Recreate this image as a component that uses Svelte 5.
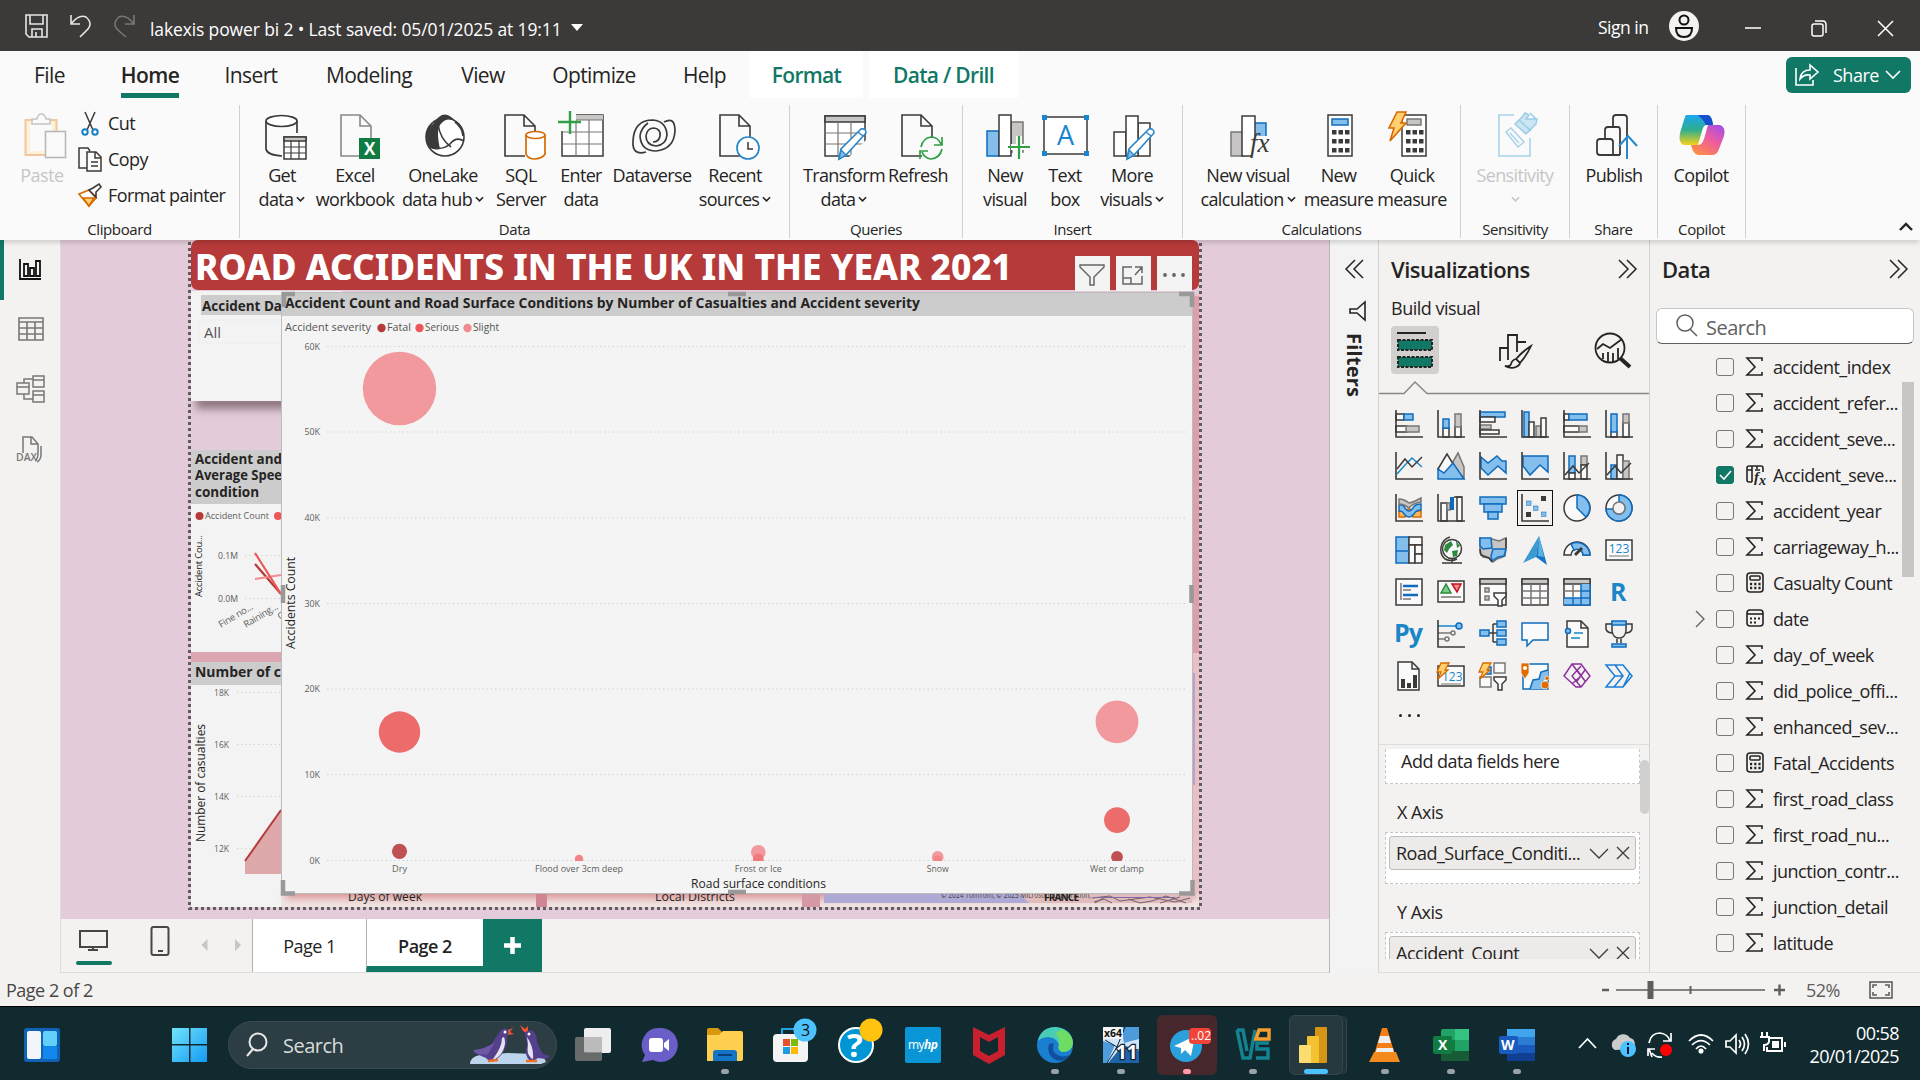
<script>
  const K = '#3b3a39';
  const B = '#0f6cbd';
  const L = '#83beec';
  const G = '#797775';
  const S = '#c8c6c4';
  const axes = `<path d="M1 0V27H28" fill="none" stroke="${K}" stroke-width="1.6"/>`;
  const r = (x, y, w, h, f = '#fafafa', s = K) =>
    `<rect x="${x}" y="${y}" width="${w}" height="${h}" fill="${f}" stroke="${s}" stroke-width="1.5"/>`;
  const p = (d, s = K, f = 'none', w = 1.5) => `<path d="${d}" fill="${f}" stroke="${s}" stroke-width="${w}"/>`;
  const c = (x, y, q, s = K, f = 'none', w = 1.5) =>
    `<circle cx="${x}" cy="${y}" r="${q}" fill="${f}" stroke="${s}" stroke-width="${w}"/>`;
  const t = (x, y, size, fill, s, extra = '') =>
    `<text x="${x}" y="${y}" font-size="${size}" fill="${fill}" ${extra}>${s}</text>`;
  const bolt = p('M4 1H12L8 8H11L1 17L4 10H0Z', '#d66b00', '#ffcf70', 1.3);
  const funnelS = p('M15 15H27V18L23 22V28H19V22L15 18Z', K, '#fafafa', 1.5);

  // Visual gallery, drawn on a 28px grid
  const visuals = [
    r(1, 4, 8, 6) + r(9, 4, 9, 6, L, B) + r(1, 16, 11, 6) + r(11, 16, 13, 6, S, G) + axes,
    r(6, 18, 6, 9) + r(6, 9, 6, 9, L, B) + r(18, 16, 6, 11) + r(18, 4, 6, 13, S, G) + axes,
    r(1, 2, 25, 5, L, B) + r(1, 7, 15, 5) + r(1, 15, 11, 4, S, G) + r(1, 20, 19, 4) + axes,
    r(3, 2, 5, 25, L, B) + r(8, 12, 5, 15) + r(15, 16, 5, 11, S, G) + r(20, 8, 5, 19) + axes,
    r(1, 4, 5, 6) + r(6, 4, 18, 6, L, B) + r(1, 16, 15, 6) + r(16, 16, 8, 6, S, G) + axes,
    r(6, 21, 6, 6) + r(6, 4, 6, 18, L, B) + r(18, 12, 6, 15) + r(18, 4, 6, 9, S, G) + axes,
    p('M2 22 10 13 17 6 27 15', '#1a86c7') + p('M2 17 10 7 17 15 27 5') + axes,
    p('M14 13 21 1 27 15V26Z', G, S) + p('M1 17 10 2 18 15 7 22Z', K, '#fafafa') + p('M1 17 7 21 16 11 27 27H1Z', B, L),
    p('M2 5 9 11 18 4 23 9H27V21L19 14 9 23 2 16Z', B, L) + axes,
    p('M2 4H27V20L19 13 9 23 2 14Z', B, L) + axes,
    r(6, 4, 6, 17, L, B) + r(6, 21, 6, 6) + r(18, 4, 6, 9, S, G) + r(18, 13, 6, 14) + p('M2 23 10 14 16 21 26 11') + axes,
    r(6, 13, 6, 14, L, B) + r(12, 3, 6, 24) + r(18, 9, 6, 18, S, G) + p('M2 23 10 14 16 21 26 11') + axes,
    p('M4 17H10Q14 13 18 17H26V23H18Q14 17 10 23H4Z', '#d66b00', '#ffb55a') + p('M4 11Q8 10 10 14 14 20 18 14 20 10 26 10V16Q21 16 19 20 14 26 9 20 8 17 4 17Z', B, L) + p('M4 5Q9 5 14 9 19 8 26 4V8Q18 9 14 14 9 10 4 10Z', G, S) + axes,
    r(4, 9, 6, 18) + r(10, 9, 3, 7, S, G) + `<rect x="13" y="3" width="4" height="13" fill="${B}"/>` + r(20, 3, 5, 24) + p('M17 3H25') + axes,
    r(1, 3, 26, 7, L, B) + r(5, 10, 18, 8, L, B) + r(9, 18, 10, 7, L, B),
    `<g fill="${L}" stroke="${B}" stroke-width=".5"><rect x="5.500" y="7" width="4.500" height="4.500"/><rect x="12.500" y="12" width="4.500" height="4.500"/><rect x="20.500" y="18" width="4.500" height="4.500"/></g><path d="M20 2h5v5h-5zM5 18h5v5h-5z" fill="${K}"/>` + axes,
    c(14, 14, 13, K, '#fafafa') + p('M14 14V1A13 13 0 0 1 23 23Z', B, L),
    c(14, 14, 13, K, '#fafafa') + p('M14 1A13 13 0 1 1 1 15H8A6 6 0 1 0 14 8Z', B, L) + c(14, 14, 6, G, '#f3f2f1'),
    r(1, 1, 13, 26, L, B) + r(14, 1, 13, 8) + r(14, 9, 6, 18) + r(20, 9, 7, 9) + r(20, 18, 7, 9) + p('M1 15H14', B),
    c(15, 13, 9.5, K, '#fafafa') + p('M13 1A13 13 0 0 0 8 23Q14 26 20 23M15 23V27M5 27H25') + `<path d="M8 9 14 5 16 9 12 13 10 17 7 14ZM19 5 23 10 20 12ZM15 15 21 14 20 20 16 21Z" fill="#2b8a3e"/>`,
    p('M1 2 4 3 13 3 20 5 27 2V13L26 20 21 22 18 23 14 26 10 22 4 21 1 17Z', G, S) + p('M1 2H12L13 12 4 13 1 10Z', B, L) + p('M14 13H27L25 20 19 21 13 25 12 20Z', B, L) + p('M27 2V12M1 13 2 19 10 22 13 26', K),
    `<path d="M18 0 2 27 15 21Z" fill="#3a9bd0"/><path d="M18 0 15 21 26 29Z" fill="#1673c5"/><path d="M18 0 17 20 23 21Z" fill="#57b4dd"/>`,
    p('M1 19A13 13 0 0 1 27 19H20A6 6 0 0 0 8 19Z', K, '#fafafa') + p('M8 8A13 13 0 0 1 27 19H20A6 6 0 0 0 11 14Z', B, L) + p('M12 19 19 12', K, 'none', 3),
    r(1, 4, 26, 20) + t(14, 17, 12, '#1a86c7', '123', 'text-anchor="middle"') + p('M4 20H24', G, 'none', 1),
    r(1, 1, 26, 26) + p('M6 5V22', G) + p('M8 8H23M8 17H23', B, 'none', 2.5) + p('M8 12H16M8 21H16', G),
    r(1, 3, 26, 21) + p('M4 15 9 6 14 15Z', '#2b8a3e', '#7cc98b') + p('M15 6H24L20 14Z', '#c50f1f', '#f0888e') + p('M4 19H24', G),
    r(1, 1, 26, 26) + r(1, 1, 26, 5, S) + r(6, 10, 4, 4, S, G) + r(6, 18, 4, 4, S, G) + funnelS,
    r(1, 1, 26, 26) + r(1, 1, 26, 5, S) + p('M10 6V27M19 6V27M1 13H27M1 20H27', G),
    r(1, 1, 26, 26) + r(1, 1, 26, 5, S) + `<path d="M18 6H27V27H1V20H18Z" fill="${L}"/>` + p('M10 6V19M1 13H18', G) + p('M18 6V27M18 13H27M1 20H27M10 20V27M1 27H27V6', B),
    t(5, 23, 25, '#1a86c7', 'R', 'font-weight="700"'),
    t(-1, 22, 25, '#1a86c7', 'Py', 'font-weight="700" textLength="29"'),
    p('M1 6H20', '#1a86c7') + p('M1 13H14M1 19H8', G) + c(22, 6, 3, B, L) + c(16, 13, 2, G) + c(10, 19, 2, G) + axes,
    p('M10 13H18M14 4V22M14 4H18M14 22H18') + r(1, 10, 9, 6, L, B) + r(18, 1, 9, 6, L, B) + r(18, 10, 9, 6, L, B) + r(18, 19, 9, 6, L, B),
    p('M1 3H27V20H12L6 26V20H1Z', B, '#fafafa'),
    p('M4 1H18L25 8V27H4Z', K, '#fafafa') + p('M18 1V8H25') + c(5, 11, 2.5, B, L) + p('M11 13H20M8 18H17', '#1a86c7', 'none', 1.3),
    p('M7 2H21V11Q20 18 14 18 8 18 7 11ZM7 4H1V9Q2 13 8 13M21 4H27V9Q26 13 20 13M12 18V23M16 18V23') + r(7, 1, 14, 4, L, B) + r(7, 24, 14, 3, L, B),
    p('M3 0H17L24 7V28H3Z', K, '#fafafa') + p('M17 0V7H24') + `<path d="M6 17h4v9H6zM12 21h4v5h-4zM18 13h4v13h-4z" fill="${K}"/>`,
    r(1, 4, 26, 20) + t(5, 19, 12, '#1a86c7', '123') + p('M4 22H24', G, 'none', 1) + bolt,
    r(15, 1, 11, 10, '#fafafa', G) + r(1, 15, 11, 10, '#fafafa', G) + r(4, 5, 8, 7, L, B) + funnelS + bolt,
    r(2, 2, 25, 25, '#fafafa', B) + `<path d="M27 8 20 10 18 17 12 18 9 27H23V18H27Z" fill="${L}"/>` + p('M27 8 20 10 18 17 12 18 9 27', B) + `<path d="M0 1H8V11L4 17 0 11ZM24 19a4 4 0 1 0 .1 0ZM26 14a2.200 2.200 0 1 0 .1 0Z" fill="#e06c00" stroke="#f3f2f1" stroke-width=".8"/><circle cx="4" cy="6" r="2" fill="#fff"/>`,
    p('M9 2H18L27 14 18 25H13L1 14 9 2ZM9 2 18 14 9 22M18 25 9 14 18 4M14 19 22 8M14 8 22 19', '#8b2d9b', 'none', 1.4),
    p('M1 3H18L27 14 18 25H1L10 14Z M10 14H18M10 3 18 14 9 25M1 25 10 14M18 25 25 11', '#1a7fd8', 'none', 1.5),
  ];

  // Ribbon pictures, drawn on a 48px grid
  const k = '#3b3a39';
  const doc = (x, col = K) =>
    p(`M${x + 20} 45H${x}V4H${x + 19}L${x + 30} 15V27M${x + 19} 4V15H${x + 30}`, col, 'none', 1.6);
  const pencil = p('M18 48 20 38 40 18Q45 17 45 22L25 44Z', '#2b88c8', '#fff', 1.6) + p('M18 48 20 39 25 44Z', '#2b88c8', L, 1.4) + p('M37 21 42 25', '#2b88c8');
  const calc = (x) =>
    r(x, 4, 24, 41, '#fff') + [0, 1, 2].map((j) => [0, 1, 2].map((i) => `<rect x="${x + 4 + i * 6.500}" y="${19 + j * 9}" width="4.500" height="4.500" fill="${K}"/>`).join('')).join('');
  const icons = {
    get: p('M7 10V38Q8 44 23 45M38 10V22', K, 'none', 1.7) + `<ellipse cx="22.500" cy="10" rx="15.500" ry="5.500" fill="#fff" stroke="${k}" stroke-width="1.700"/>` + r(25, 26, 22, 22, '#fff') + r(25, 26, 22, 4, S) + p('M25 36H47M25 42H47M32 30V48M40 30V48', K, 'none', 1.2),
    excel: doc(9, '#8a8886') + '<rect x="27" y="27" width="21" height="21" fill="#107c41"/>' + t(32, 44, 17, '#fff', 'X', 'font-weight="700"'),
    lake: c(25, 26, 19, K, '#fff', 1.6) + `<path d="M13 13Q24-5 36 11 27 5 20 14 16 20 20 38 10 40 7 32 3 18 13 13Z" fill="${k}"/>` + p('M18 13Q20 28 31 36M10 36Q22 40 30 33 36 25 44 30M35 11Q42 16 43 25', K, 'none', 1.6),
    sql: doc(7) + p('M28 24V43Q30 48 37 48 45 47 47 43V24', '#d66b00', '#fff', 1.7) + `<ellipse cx="37.500" cy="24" rx="9.500" ry="3.500" fill="#fff" stroke="#d66b00" stroke-width="1.700"/>`,
    enter: r(4, 4, 41, 41, '#fff') + `<path d="M18 4H45V9H18Z" fill="${S}"/>` + p('M4 21H45M4 33H45M18 9V45M31 9V45M18 9H45', G, 'none', 1.2) + '<path d="M0 0H18V10H14V20H0Z" fill="#fafafa"/>' + p('M12 0V23M0 11H23', '#2f9e44', 'none', 2.4),
    verse: p('M17 41Q3 45 4 30 5 9 24 9 37 10 38 24 37 34 27 35 17 34 17 25 18 17 25 17 32 18 31 25 30 31 24 31M35 11Q46 5 46 20 45 38 27 40 12 40 11 25 12 17 19 12', K, 'none', 1.7),
    recent: doc(8) + c(36, 37, 11, '#2b88c8', '#fff', 1.7) + p('M36 31V38H41', K),
    transform: r(4, 5, 40, 40, '#fff') + r(4, 5, 40, 6, S) + p('M4 22H44M4 33H44M17 11V45M30 11V45', G, 'none', 1.2) + '<path d="M28 46 46 28V48H28Z" fill="#fafafa"/>' + pencil,
    refresh: doc(7) + p('M26 36Q28 27 36 26 43 26 46 33M47 26V34H39M47 38Q45 47 36 48 29 47 27 41M25 48V40H33', '#2f9e44', 'none', 1.7),
    visual: r(5, 20, 12, 25, L, B) + r(29, 11, 12, 30, S, G) + r(17, 4, 12, 41, '#fff') + '<path d="M34 25H40V33H46V39H40V46H31V39H29V33H34Z" fill="#fafafa"/>' + p('M37 25V48M26 36H48', '#2f9e44', 'none', 2.2),
    text: r(2, 6, 43, 37, '#fff') + `<path d="M0 4h5v5H0zM42 4h5v5h-5zM0 40h5v5H0zM42 40h5v5h-5z" fill="#1a86d0"/>` + t(15, 34, 27, '#1a86d0', 'A'),
    more: r(5, 21, 12, 24, '#fff') + r(29, 12, 12, 33, '#fff') + r(17, 5, 12, 40, '#fff') + pencil,
    calcv: r(6, 21, 12, 24, S, G) + r(29, 12, 12, 18, L, B) + r(17, 5, 13, 40, '#fff') + '<path d="M29 25H46V48H26Z" fill="#fafafa"/>' + t(25, 41, 27, K, 'fx', 'font-family="Liberation Serif" font-style="italic"'),
    measure: calc(12) + r(16, 8, 16, 6, L, B),
    quick: calc(13) + r(18, 8, 14, 6, S, G) + p('M8 1H17L12 12H17L1 30 5 17H0Z', '#d66b00', '#ffcf70', 1.6),
    sens: p('M22 4H7V45H38V27', '#9fd0e8', 'none', 1.6) + p('M14 21 19 17 32 31 26 36ZM18 22 27 32', '#9fd0e8') + p('M23 13 31 5 33 2 37 4 34 8 45 8 44 13 37 20 34 23Z M27 9 39 20 M38 2 44 8', '#8fc9e6', '#c7e3f1', 1.5),
    publish: p('M29 44H9Q6 44 6 41V31Q6 28 9 28H19Q22 28 22 31V44M14 28V19Q14 16 17 16H27Q29 16 29 19V44M22 16V7Q22 4 25 4H33Q36 4 36 7V25', K, 'none', 1.8) + p('M36 48V25M28 35 37 25 46 35', '#2b88c8', 'none', 2),
  };

  const groups = [
    { name: 'Data', w: 550, pad: 10, items: [
      [64, 'get', 'Get', 'data', 1], [82, 'excel', 'Excel', 'workbook'], [94, 'lake', 'OneLake', 'data hub', 1],
      [62, 'sql', 'SQL', 'Server'], [58, 'enter', 'Enter', 'data'], [84, 'verse', 'Dataverse', ''], [82, 'recent', 'Recent', 'sources', 1]] },
    { name: 'Queries', w: 173, pad: 12, items: [[84, 'transform', 'Transform', 'data', 1], [64, 'refresh', 'Refresh', '']] },
    { name: 'Insert', w: 220, pad: 6, items: [[72, 'visual', 'New', 'visual'], [48, 'text', 'Text', 'box'], [86, 'more', 'More', 'visuals', 1]] },
    { name: 'Calculations', w: 278, pad: 15, items: [[100, 'calcv', 'New visual', 'calculation', 1], [81, 'measure', 'New', 'measure'], [66, 'quick', 'Quick', 'measure']] },
    { name: 'Sensitivity', w: 109, pad: 9, items: [[90, 'sens', 'Sensitivity', '', 1]] },
    { name: 'Share', w: 88, pad: 9, items: [[70, 'publish', 'Publish', '']] },
    { name: 'Copilot', w: 88, pad: 7, items: [[72, 'copilot', 'Copilot', '']] },
  ];
  const tabs = [['File', 99], ['Home', 102], ['Insert', 100], ['Modeling', 136], ['View', 92], ['Optimize', 130], ['Help', 91]];
  const fields = [
    ['accident_index', 's'], ['accident_refer...', 's'], ['accident_seve...', 's'], ['Accident_seve...', 'f'], ['accident_year', 's'],
    ['carriageway_h...', 's'], ['Casualty Count', 'c'], ['date', 'd'], ['day_of_week', 's'], ['did_police_offi...', 's'], ['enhanced_sev...', 's'],
    ['Fatal_Accidents', 'c'], ['first_road_class', 's'], ['first_road_nu...', 's'], ['junction_contr...', 's'], ['junction_detail', 's'], ['latitude', 's'],
  ];
  const grid = [['60K', 346], ['50K', 431.5], ['40K', 517.5], ['30K', 603], ['20K', 688.5], ['10K', 774], ['0K', 860]];
  const cats = [['Dry', 399.5, 15], ['Flood over 3cm deep', 579, 88], ['Frost or Ice', 758.3, 47], ['Snow', 937.7, 22], ['Wet or damp', 1117, 54]];
  const bubbles = [
    [399.5, 388.5, 36.7, '#f2999d'], [399.5, 732, 20.7, '#ec6b6b'], [399.5, 851.3, 7.6, '#bf5054'], [579, 859, 4.2, '#f08487'],
    [758.3, 852.3, 7.4, '#f2999d'], [758.3, 859, 5.4, '#ee7a7d'], [937.7, 857, 5.9, '#f2999d'], [937.7, 860, 4.5, '#f08487'],
    [1117, 721.8, 21.4, '#f2999d'], [1117, 820.2, 12.9, '#ec6b6b'], [1117, 857, 5.9, '#bf5054'],
  ];

  // Taskbar pictures, drawn on a 36px grid
  const apps = [
    { i: '<rect x="9" y="1" width="27" height="25" rx="2" fill="#eee"/><rect x="0" y="10" width="27" height="24" rx="2" fill="#777" opacity=".85"/><path d="M9 10H27V25H9Z" fill="#bbb"/>' },
    { i: '<path d="M18 1A17 17 0 1 1 12 33L1 35 4 28A17 17 0 0 1 18 1Z" fill="#6a5fc8"/><rect x="8" y="11" width="14" height="14" rx="3" fill="#fff"/><path d="M23 16 28 12V24L23 20Z" fill="#fff"/>' },
    { i: '<path d="M0 3Q0 1 2 1H11L15 5V12H0Z" fill="#d9970d"/><path d="M0 8H12L16 4H34Q36 4 36 6V32Q36 34 34 34H0Z" fill="#ffd04f"/><path d="M6 34V26Q6 23 9 23H27Q30 23 30 26V34Z" fill="#1475c8"/><path d="M11 28H25" stroke="#083f79" stroke-width="2"/>', dot: 1 },
    { i: '<path d="M9 8V2H24V8" fill="none" stroke="#20a4e8" stroke-width="2"/><rect x="0" y="7" width="35" height="28" rx="4" fill="#f4f4f4"/><path d="M10 12h7v7h-7z" fill="#e8502b"/><path d="M18 12h7v7h-7z" fill="#7fba00"/><path d="M10 20h7v7h-7z" fill="#1f9de0"/><path d="M18 20h7v7h-7z" fill="#ffb900"/><circle cx="32" cy="3" r="11.500" fill="#4cc2ff"/><text x="28" y="9" font-size="16" fill="#111">3</text>' },
    { i: '<circle cx="17" cy="18" r="17" fill="#0096d6" stroke="#fff" stroke-width="2"/><text x="8" y="30" font-size="33" font-weight="700" fill="#fff">?</text><circle cx="32" cy="3" r="11.500" fill="#ffc20e"/>' },
    { i: '<rect width="36" height="36" rx="2" fill="#0a96d6"/><text x="3" y="22" font-size="12" fill="#fff" textLength="30">my<tspan font-weight="700" font-style="italic">hp</tspan></text>' },
    { i: '<path d="M2 0 18 8 34 0V28L18 37 2 28Z" fill="#c8202f"/><path d="M9 10 18 15 27 10V24L18 29 9 24Z" fill="#112a30"/>' },
    { i: '<circle cx="18" cy="18" r="18" fill="#1b7fd0"/><path d="M1 14Q4 0 19 0 35 2 36 16 35 25 25 25 20 23 22 18 20 11 12 10 5 10 1 14Z" fill="#49cdb4"/><path d="M25 2Q36 8 36 16 35 25 25 25 20 23 22 18 24 10 18 7Z" fill="#6fdc64"/><path d="M12 17Q9 28 19 33 28 36 33 28 23 32 17 25 15 20 17 16Z" fill="#0f4f9e"/>', dot: 1 },
    { i: '<rect width="36" height="36" fill="#cfe6f8"/><path d="M0 14 12 18 4 36H0ZM18 0 36 0V12L21 16Z" fill="#4e9bdc"/><path d="M5 36 20 18 36 24V36Z" fill="#1e64ac"/><path d="M2 13 14 20 22 0M14 20 4 36M14 20 36 23" stroke="#123" fill="none"/><rect width="20" height="12" rx="2" fill="#f5f5f5"/><text x="1" y="10" font-size="11" font-weight="700" fill="#111" textLength="18" lengthAdjust="spacingAndGlyphs">x64</text><text x="13" y="32" font-size="19" font-weight="700" fill="#fff" stroke="#123" stroke-width="2.500" paint-order="stroke">11</text>', dot: 1 },
    { i: '<circle cx="17" cy="19" r="16" fill="#2aa1dd"/><path d="M5 19 26 9 22 29 16 23 12 27V21Z" fill="#fff"/><rect x="20" y="1" width="22" height="16" rx="4" fill="#f04438"/><text x="22" y="13" font-size="12" fill="#fff">..02</text>', dot: 1, tile: 'red' },
    { i: '<path d="M2 3H8L12 24M2 3 8 31H15L20 3M34 16H22V22H33V31H21" fill="none" stroke="#138392" stroke-width="3.500"/><path d="M24 3H34V12H21Z" fill="none" stroke="#f59e2e" stroke-width="3.500"/>', dot: 1 },
    { i: '<rect x="17" y="0" width="12" height="36" rx="1" fill="#d69514"/><rect x="9" y="9" width="12" height="27" rx="1" fill="#f2c230"/><rect x="1" y="18" width="12" height="18" rx="1" fill="#fbdc70"/>', dot: 1, tile: 'on' },
    { i: '<path d="M15 1H20L28 28H7Z" fill="#f57f17"/><path d="M13 9H22L24 16H11ZM10 21H26L27 27H8Z" fill="#eee"/><path d="M7 25H29L33 35H2Z" fill="#f28a1e"/>', dot: 1 },
    { i: '<rect x="8" y="2" width="28" height="32" rx="2" fill="#21a366"/><path d="M22 2H36V13H22Z" fill="#33c481"/><path d="M8 13H22V24H8Z" fill="#107c41"/><path d="M8 24H36V34H8Z" fill="#185c37"/><rect x="0" y="9" width="19" height="18" rx="2" fill="#107c41"/><text x="5" y="23" font-size="14" font-weight="700" fill="#fff">X</text>', dot: 1 },
    { i: '<rect x="8" y="2" width="28" height="32" rx="2" fill="#2b7cd3"/><path d="M8 2H36V10H8Z" fill="#41a5ee"/><path d="M8 18H36V26H8Z" fill="#185abd"/><path d="M8 26H36V34H8Z" fill="#103f91"/><rect x="0" y="9" width="19" height="18" rx="2" fill="#185abd"/><text x="2" y="23" font-size="14" font-weight="700" fill="#fff">W</text>', dot: 1 },
  ];
</script>

{#snippet chev(cls)}
  <svg class={cls} viewBox="0 0 10 8" width="9" height="8"><path d="M1 2 5 6 9 2" fill="none" stroke="currentColor" stroke-width="1.8" /></svg>
{/snippet}
{#snippet dbl(flip)}
  <svg class:flip width="20" height="20" viewBox="0 0 20 20"><path d="M1 1 10 10 1 19M9 1 18 10 9 19" fill="none" stroke="#252423" stroke-width="1.5" /></svg>
{/snippet}
{#snippet well(name)}
  <div class="well"><div class="chip"><span>{name}</span>
    <svg width="42" height="20" viewBox="0 0 42 20"><path d="M1 6 10 15 19 6M28 4 40 16M40 4 28 16" fill="none" stroke="#3b3a39" stroke-width="1.3" /></svg></div></div>
{/snippet}

<div class="app">
  <header class="title">
    <svg class="quick" width="120" height="30" viewBox="0 0 120 30" fill="none" stroke="#e6e6e6" stroke-width="1.6">
      <path d="M1 4H22V26H4L1 23ZM5 4V13H18V4M7 26V18H17V26M11 21V26" />
      <path d="M46 4V13H55M46 13Q54 3 61 6 69 13 61 20L55 26" />
      <path d="M109 4V13H100M109 13Q101 3 94 6 86 13 94 20L101 26" stroke="#777" />
    </svg>
    <span class="doc">lakexis power bi 2 • Last saved: 05/01/2025 at 19:11</span>
    <i class="tri"></i>
    <span class="sign">Sign in</span>
    <svg class="user" width="30" height="30" viewBox="0 0 30 30"><circle cx="15" cy="15" r="15" fill="#f3f2f1" /><g fill="none" stroke="#111" stroke-width="2"><circle cx="15" cy="9" r="4.500" /><path d="M7 17H23Q23 26 15 26 7 26 7 17Z" /></g></svg>
    <svg class="win" width="150" height="20" viewBox="0 0 150 20" fill="none" stroke="#fff" stroke-width="1.5"><path d="M0 10H16M133 3 148 18M148 3 133 18" /><rect x="67" y="6" width="11" height="12" rx="2" /><path d="M70 3H78Q81 3 81 7V15" /></svg>
  </header>

  <nav class="tabs">
    {#each tabs as [name, w]}<div class="tab" class:on={name === 'Home'} style="width:{w}px"><span>{name}</span></div>{/each}
    <div class="ctx fmt">Format</div>
    <div class="ctx drill">Data / Drill</div>
    <div class="share">
      <svg width="26" height="24" viewBox="0 0 26 24" fill="none" stroke="#fff" stroke-width="1.6"><path d="M2 5V22H19V17M6 16Q7 7 16 7V2L24 9 16 16V12Q10 11 6 16Z" /></svg>
      <span>Share</span>
      <svg width="16" height="12" viewBox="0 0 16 12"><path d="M1 2 8 9 15 2" fill="none" stroke="#fff" stroke-width="1.6" /></svg>
    </div>
  </nav>

  <section class="ribbon">
    <div class="group clip">
      <div class="cliprow">
        <div class="paste">
          <svg width="44" height="46" viewBox="0 0 44 46"><rect x="1.500" y="7" width="31" height="35" fill="#fdf1d8" stroke="#f3c79c" stroke-width="2" /><rect x="6" y="11" width="22" height="27" fill="#fafafa" /><path d="M8 11V6H13Q14 1 17 1 21 1 22 6H26V11Z" fill="#fafafa" stroke="#c4c4c4" stroke-width="1.500" /><rect x="21.500" y="18.500" width="20" height="26" fill="#fafafa" stroke="#b8b8b8" stroke-width="1.600" /></svg>
          <span>Paste</span>
        </div>
        <div class="cmds">
          <div><svg width="24" height="25" viewBox="0 0 24 25" fill="none" stroke="#3b3a39" stroke-width="1.5"><path d="M7 1 15 19M17 1 9 19" /><g stroke="#1a7fc1" stroke-width="2"><circle cx="7" cy="21" r="2.700" /><circle cx="17" cy="21" r="2.700" /></g></svg>Cut</div>
          <div><svg width="24" height="25" viewBox="0 0 24 25" fill="none" stroke="#3b3a39" stroke-width="1.5"><path d="M9 21H1V1H10L12 4M9 5H18L23 10V24H9ZM17 5V11H23M13 15H20M13 19H20" /></svg>Copy</div>
          <div><svg width="24" height="25" viewBox="0 0 24 25" stroke-width="1.6"><path d="M1 11 11 7 18 15 11 23Z" fill="#fff" stroke="#d66b00" /><path d="M5 15 16 15 11 23Z" fill="#ffcf70" stroke="#d66b00" /><path d="M11 7 15 5 21 1 23 4 18 9 18 14Z" fill="#fff" stroke="#3b3a39" /></svg>Format painter</div>
        </div>
      </div>
      <div class="gname">Clipboard</div>
    </div>
    {#each groups as g}
      <div class="group" style="width:{g.w}px">
        <div class="items" style="padding-left:{g.pad}px">
          {#each g.items as [w, icon, a, b, more]}
            <div class="item" class:off={icon === 'sens'} style="width:{w}px">
              {#if icon === 'copilot'}
                <svg width="48" height="48" viewBox="0 0 48 48">
                  <defs>
                    <linearGradient id="ca" x1="0" y1="0" x2="0" y2="1"><stop offset="0" stop-color="#1aa7f0" /><stop offset=".5" stop-color="#2fae8d" /><stop offset="1" stop-color="#fbd117" /></linearGradient>
                    <linearGradient id="cb" x1="1" y1="0" x2=".3" y2="1"><stop offset="0" stop-color="#9b4df0" /><stop offset=".5" stop-color="#ee5aa0" /><stop offset="1" stop-color="#fb8a4a" /></linearGradient>
                  </defs>
                  <path d="M8 4H30Q34 5 35 14H28Q25 15 24 20L20 34H6Q0 32 2 22L6 9Q7 5 8 4Z" fill="url(#ca)" />
                  <path d="M20 4H30Q34 5 35 14H28Q25 8 20 4Z" fill="#1650d0" />
                  <path d="M30 14H42Q48 16 46 25L41 38Q39 44 34 44H20Q15 43 13 34H20Q24 34 26 28Z" fill="url(#cb)" />
                </svg>
              {:else}
                <svg width="48" height="48" viewBox="0 0 48 48">{@html icons[icon]}</svg>
              {/if}
              <span>{a}</span>
              <span>{b}{#if more}{@render chev('cv')}{/if}</span>
            </div>
          {/each}
        </div>
        <div class="gname">{g.name}</div>
      </div>
    {/each}
    <svg class="collapse" width="14" height="10" viewBox="0 0 14 10"><path d="M1 8 7 2 13 8" fill="none" stroke="#252423" stroke-width="2.4" /></svg>
  </section>

  <main>
    <aside class="rail">
      <div class="r on"><svg width="30" height="30" viewBox="0 0 30 30" fill="none" stroke="#111" stroke-width="1.8"><path d="M4 3V23H25" /><path d="M8 8H12V20H8ZM14 12H18V20H14ZM20 5H24V20H20Z" /></svg></div>
      <div class="r"><svg width="30" height="30" viewBox="0 0 30 30" fill="none" stroke="#797775" stroke-width="1.6"><path d="M3 4H27V26H3ZM3 8H27M3 14H27M3 20H27M11 8V26M19 8V26" /></svg></div>
      <div class="r"><svg width="30" height="30" viewBox="0 0 30 30" fill="none" stroke="#797775" stroke-width="1.5"><path d="M17 2H28V13H17ZM17 6H28M17 17H28V28H17ZM17 21H28M1 9H13V20H1ZM1 13H13M8 9V5H17M8 20V25H17" /></svg></div>
      <div class="r dax"><svg width="30" height="30" viewBox="0 0 30 30" fill="none" stroke="#797775" stroke-width="1.5"><path d="M8 17V1H17L23 8V17Q23 23 20 25M16 1V8H23M26 10V18Q26 24 22 26" /><text x="1" y="25" font-size="11" font-weight="600" fill="#797775" stroke="none" textLength="21" lengthAdjust="spacingAndGlyphs">DAX</text></svg></div>
    </aside>

    <div class="center">
      <svg class="report" viewBox="61 240 1268 679" width="1268" height="679">
        <defs>
          <filter id="sh" x="-20%" y="-50%" width="140%" height="250%"><feGaussianBlur stdDeviation="4" /></filter>
          <clipPath id="plot"><rect x="320" y="330" width="880" height="531" /></clipPath>
          <clipPath id="under"><rect x="191" y="893" width="1008" height="14" /></clipPath>
        </defs>
        <rect x="61" y="240" width="1268" height="679" fill="#e3cbd9" />
        <rect x="191" y="240" width="1008" height="50" rx="7" fill="#b73a3a" />
        <text class="head" x="195" y="279.500" textLength="817" lengthAdjust="spacingAndGlyphs">ROAD ACCIDENTS IN THE UK IN THE YEAR 2021</text>
        <rect x="1192" y="294" width="8" height="613" fill="#e7bfc4" />
        <rect x="1192" y="296" width="7" height="357" fill="#dba0ab" />
        <rect x="1192" y="673" width="3" height="112" fill="#b3a4cb" />
        <rect x="196" y="395" width="150" height="14" fill="#8c7580" filter="url(#sh)" />
        <rect x="191" y="291" width="151" height="110" fill="#f3f3f3" />
        <rect x="201" y="295" width="130" height="20" fill="#ccc" />
        <text class="bold" x="202" y="311" fill="#000" textLength="80" lengthAdjust="spacingAndGlyphs">Accident Da</text>
        <rect x="199" y="320" width="130" height="23" fill="none" stroke="#eee" />
        <text x="204" y="338" font-size="15" fill="#555" textLength="17" lengthAdjust="spacingAndGlyphs">All</text>

        <rect x="191" y="450" width="100" height="202" fill="#f3f3f3" />
        <rect x="191" y="450" width="100" height="54" fill="#ccc" />
        <text class="bold" x="195" y="464" textLength="87" lengthAdjust="spacingAndGlyphs">Accident and</text>
        <text class="bold" x="195" y="480" textLength="87" lengthAdjust="spacingAndGlyphs">Average Spee</text>
        <text class="bold" x="195" y="497" textLength="64" lengthAdjust="spacingAndGlyphs">condition</text>
        <circle cx="199.500" cy="516" r="4" fill="#b73a3a" /><circle cx="278" cy="516" r="4" fill="#ee5659" />
        <text class="tick" x="205" y="519" textLength="64" lengthAdjust="spacingAndGlyphs">Accident Count</text>
        <text class="tick dark" transform="translate(202 597) rotate(-90)" textLength="62">Accident Cou...</text>
        <text class="tick" x="218" y="559" textLength="20" lengthAdjust="spacingAndGlyphs">0.1M</text>
        <text class="tick" x="218" y="602" textLength="20" lengthAdjust="spacingAndGlyphs">0.0M</text>
        <path class="dots" d="M245 555.500H281M245 598.500H281" />
        <g fill="none" stroke-width="2.200"><path d="M255 564 281 594" stroke="#b73a3a" /><path d="M255 579 281 575" stroke="#f28b90" /><path d="M255 553 281 594" stroke="#ee5659" /></g>
        <text class="tick" transform="translate(221 628) rotate(-31)" textLength="38">Fine no...</text>
        <text class="tick" transform="translate(246 628) rotate(-31)" textLength="38">Raining...</text>
        <text class="tick" transform="translate(280 620) rotate(-31)">C</text>

        <rect x="191" y="652" width="90" height="10" fill="#dba6b1" />
        <rect x="191" y="662" width="90" height="245" fill="#f3f3f3" />
        <rect x="191" y="662" width="90" height="23" fill="#ccc" />
        <text class="bold" x="195" y="677" textLength="86" lengthAdjust="spacingAndGlyphs">Number of c</text>
        {#each [['18K', 692], ['16K', 744], ['14K', 796], ['12K', 848]] as [n, y]}
          <text class="tick" x="214" y={y + 4} textLength="15" lengthAdjust="spacingAndGlyphs">{n}</text>
          <path class="dots" d="M237 {y + 0.5}H281" />
        {/each}
        <text class="axis" transform="translate(205 842) rotate(-90)" textLength="118" lengthAdjust="spacingAndGlyphs">Number of casualties</text>
        <path d="M245 861 281 810V874H245Z" fill="#dda9aa" /><path d="M245 861 281 810" stroke="#b73a3a" stroke-width="2" />

        <g clip-path="url(#under)">
          <rect x="281" y="892" width="918" height="15" fill="#f0e4e3" />
          <rect x="286" y="886" width="910" height="12" fill="#d98e8e" filter="url(#sh)" />
          <rect x="536" y="893" width="11" height="14" fill="#cf8592" /><rect x="802" y="893" width="18" height="14" fill="#d598a5" />
          <path d="M824 893H1020Q1025 900 1030 903H824Z" fill="#aeaad5" /><path d="M1020 893H1192V903H1030Z" fill="#e1bcbd" />
          <text x="941" y="898" font-size="9" fill="#444" textLength="150" lengthAdjust="spacingAndGlyphs">© 2024 TomTom, © 2025 Microsoft Corporation,</text>
          <path d="M1092 898 1110 896 1120 901 1150 897 1175 902 1190 898M1095 903 1105 897M1160 903 1180 897M1094 902 1104 899 1112 903M1128 899 1140 903 1152 901 1166 896 1186 903" stroke="#76616c" fill="none" />
          <path d="M1093 897.500H1175" stroke="#7a6aa8" />
          <text x="1044" y="901" font-size="10" font-weight="700" fill="#222" textLength="35">FRANCE</text>
          <text class="axis" x="348" y="901" textLength="74" lengthAdjust="spacingAndGlyphs">Days of week</text>
          <text class="axis" x="655" y="901" textLength="80" lengthAdjust="spacingAndGlyphs">Local Districts</text>
        </g>

        <rect x="281.500" y="292.500" width="911" height="601" fill="#f4f4f4" stroke="#bcbcbc" />
        <rect x="282" y="293" width="910" height="23" fill="#ccc" />
        <text class="bold" x="285" y="308" textLength="635" lengthAdjust="spacingAndGlyphs">Accident Count and Road Surface Conditions by Number of Casualties and Accident severity</text>
        <g class="leg">
          <text x="285" y="331" textLength="86" lengthAdjust="spacingAndGlyphs">Accident severity</text>
          <circle cx="381.500" cy="328" r="4.200" fill="#b73a3a" /><text x="387" y="331" textLength="24" lengthAdjust="spacingAndGlyphs">Fatal</text>
          <circle cx="419.500" cy="328" r="4.200" fill="#ee5659" /><text x="425" y="331" textLength="34" lengthAdjust="spacingAndGlyphs">Serious</text>
          <circle cx="467.500" cy="328" r="4.200" fill="#f28b90" /><text x="473" y="331" textLength="26" lengthAdjust="spacingAndGlyphs">Slight</text>
        </g>
        {#each grid as [n, y]}
          <text class="tick" x="320" y={y + 3.5} text-anchor="end" textLength={n.length * 5.2} lengthAdjust="spacingAndGlyphs">{n}</text>
          <path class="dots" d="M327 {y + 0.5}H1187" />
        {/each}
        <g clip-path="url(#plot)">{#each bubbles as [x, y, q, f]}<circle cx={x} cy={y} r={q} fill={f} />{/each}</g>
        {#each cats as [n, x, w]}<text class="tick" {x} y="872" text-anchor="middle" textLength={w} lengthAdjust="spacingAndGlyphs">{n}</text>{/each}
        <text class="axis" x="691" y="888" textLength="135" lengthAdjust="spacingAndGlyphs">Road surface conditions</text>
        <text class="axis" transform="translate(295 649) rotate(-90)" textLength="92" lengthAdjust="spacingAndGlyphs">Accidents Count</text>
        <g fill="none" stroke="#999" stroke-width="4.500">
          <path d="M284 307V294H295M1179 294H1192V307M283 880V893.500H295M1179 893.500H1192.500V880M283 585V603M1191.500 585V603M728 294H746M728 892H746" />
        </g>
        <g>
          <path d="M1075 256h35v35h-35zM1116 256h35v35h-35zM1157 256h35v35h-35z" fill="#f3f3f3" />
          <path d="M1080 265H1104V267L1094 277V285H1090V277L1080 267ZM1132 267H1123V284H1142V276M1135 267H1142V273M1142 267 1135 275M1123 278H1131V284" fill="none" stroke="#666" stroke-width="1.500" />
          <g fill="#666"><circle cx="1165" cy="275" r="1.900" /><circle cx="1174" cy="275" r="1.900" /><circle cx="1183" cy="275" r="1.900" /></g>
        </g>
        <path d="M189.500 242V908.500H1200.500V240" fill="none" stroke="#605e5c" stroke-width="3" stroke-dasharray="3 3" />
      </svg>
      <div class="pages">
        <svg class="dev" width="191" height="53" viewBox="0 0 191 53" fill="none" stroke="#484644" stroke-width="2"><path d="M19 12H46V28H19ZM32 28V31M27 31H37" /><rect x="90.500" y="8" width="17" height="28" rx="2" /><path d="M97 32H102" /><path d="M140.500 26 146.500 20V32ZM180 26 174 20V32Z" fill="#c8c6c4" stroke="none" /><path d="M17 44H49" stroke="#117865" stroke-width="4" stroke-linecap="round" /></svg>
        <div class="pg">Page 1</div>
        <div class="pg on">Page 2</div>
        <div class="add"><svg width="17" height="17" viewBox="0 0 17 17"><path d="M8.500 0V17M0 8.500H17" stroke="#fff" stroke-width="4.500" /></svg></div>
      </div>
    </div>

    <aside class="filters">
      {@render dbl(true)}
      <svg class="fun" width="18" height="20" viewBox="0 0 18 20"><path d="M16 1V19L8 12H1V8H8Z" fill="none" stroke="#252423" stroke-width="1.6" /></svg>
      <span>Filters</span>
    </aside>

    <aside class="viz">
      <div class="ph"><h2 class="vt">Visualizations</h2>{@render dbl(false)}</div>
      <div class="build">Build visual</div>
      <div class="modes">
        <div class="mode on"><svg width="48" height="48" viewBox="0 0 48 48"><path d="M6 7H35" stroke="#252423" stroke-width="2" /><path d="M7 14H41V24H7ZM7 31H41V41H7Z" fill="#117865" stroke="#252423" stroke-width="2" stroke-dasharray="3 1.5" /></svg></div>
        <div class="mode"><svg width="48" height="48" viewBox="0 0 48 48" fill="none" stroke="#252423" stroke-width="1.8"><path d="M10 35V22H18V34M18 30V9H27V26M27 16H36M41 20Q33 25 26 33L30 37Q37 29 41 20ZM26 33Q22 34 21 38 20 41 15 40 21 43 26 41 30 39 30 37" /></svg></div>
        <div class="mode"><svg width="48" height="48" viewBox="0 0 48 48" fill="none" stroke="#252423" stroke-width="1.8"><circle cx="21" cy="22" r="14.500" /><path d="M8 23 14 18 21 22 33 13M14 33V27M19 36V26M24 36V27M29 33V22" /><path d="M31 32 41 41" stroke-width="4" /></svg></div>
      </div>
      <svg class="notch" width="270" height="16" viewBox="0 0 270 16"><path d="M0 13.500H25L36 2 48 13.500H270" fill="none" stroke="#8a8886" stroke-width="1.500" /></svg>
      <div class="gallery">
        {#each visuals as v, i}<div class="v" class:sel={i === 15}><svg width="28" height="28" viewBox="0 0 28 28">{@html v}</svg></div>{/each}
        <div class="v dots3"><i></i><i></i><i></i></div>
      </div>
      <div class="wells">
        <div class="empty">Add data fields here</div>
        <div class="lb">X Axis</div>
        {@render well('Road_Surface_Conditi...')}
        <div class="lb">Y Axis</div>
        {@render well('Accident_Count')}
        <i class="thumb"></i>
      </div>
    </aside>

    <aside class="data">
      <div class="ph"><h2 class="dt">Data</h2>{@render dbl(false)}</div>
      <div class="search"><svg width="24" height="24" viewBox="0 0 24 24" fill="none" stroke="#605e5c" stroke-width="1.500"><circle cx="9" cy="9" r="8" /><path d="M14 15 21 22" /></svg><span>Search</span></div>
      <div class="fields">
        {#each fields as [name, kind]}
          <div class="f">
            <svg class="ar" width="12" height="18" viewBox="0 0 12 18">{#if kind === 'd'}<path d="M2 1 10 9 2 17" fill="none" stroke="#605e5c" stroke-width="1.300" />{/if}</svg>
            <i class="cb" class:ck={kind === 'f'}>{#if kind === 'f'}<svg width="16" height="16" viewBox="0 0 16 16"><path d="M3 8 7 12 14 4" fill="none" stroke="#fff" stroke-width="1.600" /></svg>{/if}</i>
            <svg class="kd" width="22" height="22" viewBox="0 0 22 22" fill="none" stroke="#252423" stroke-width="1.600">
              {#if kind === 's'}<path d="M17 5V2H2L10 11 2 19H17V16" />
              {:else if kind === 'c'}<rect x="2" y="1" width="16" height="19" rx="3" /><rect x="5" y="4" width="10" height="4" rx="1" /><path d="M5 12H16M5 16H16" stroke-width="2.400" stroke-dasharray="2.200 2" />
              {:else if kind === 'd'}<rect x="2" y="2" width="16" height="16" rx="3" /><path d="M2 6H18" /><path d="M5 10.500H16M5 14.500H12" stroke-width="2" stroke-dasharray="2 2" />
              {:else}<path d="M7 18H4Q2 18 2 16V4Q2 2 4 2H16Q18 2 18 4V8M2 6H7M7 2V18M12 2V5M10 6H15" /><text x="9" y="18" font-size="15" font-style="italic" font-weight="700" fill="#252423" stroke="none" font-family="Liberation Serif">f</text><text x="14" y="21" font-size="14" font-style="italic" font-weight="700" fill="#252423" stroke="none" font-family="Liberation Serif">x</text>{/if}
            </svg>
            <span>{name}</span>
          </div>
        {/each}
        <i class="thumb"></i>
      </div>
    </aside>
  </main>

  <footer class="status">
    <span class="pn">Page 2 of 2</span>
    <svg width="184" height="20" viewBox="0 0 184 20" stroke="#605e5c" fill="none"><path d="M0 10H7M172 10H183M177.500 4.500V15.500" stroke-width="2.400" /><path d="M14 10H163" stroke-width="1.500" /><path d="M88.500 6V14" stroke-width="2" /><path d="M48.500 1V19" stroke-width="6" /></svg>
    <span class="pct">52%</span>
    <svg width="24" height="18" viewBox="0 0 24 18" stroke="#605e5c" fill="none" stroke-width="1.600"><rect x="1" y="1" width="22" height="16" /><path d="M4 7V4H8M16 4H20V7M20 11V14H16M8 14H4V11" /></svg>
  </footer>

  <footer class="task">
    <svg class="wid" width="36" height="34" viewBox="0 0 36 34"><rect width="36" height="34" rx="3" fill="#0f62b5" /><rect x="3" y="3" width="14" height="28" rx="2" fill="#f2f6fb" /><rect x="19" y="3" width="14" height="15" rx="2" fill="#62d0fb" /><path d="M19 18H33V31H19Z" fill="#1287ee" /></svg>
    <svg class="start" width="36" height="36" viewBox="0 0 36 36"><defs><linearGradient id="w" x1="0" y1="0" x2="1" y2="1"><stop offset="0" stop-color="#72e3fb" /><stop offset="1" stop-color="#129bf5" /></linearGradient></defs><path d="M0 1H17V17H0ZM18.500 1H35V17H18.500ZM0 18.500H17V35H0ZM18.500 18.500H35V35H18.500Z" fill="url(#w)" /></svg>
    <div class="pill">
      <svg width="24" height="26" viewBox="0 0 24 26" fill="none" stroke="#e8e8e8" stroke-width="2"><circle cx="12" cy="10" r="8.500" /><path d="M7 17 1 24" /></svg>
      <span>Search</span>
      <svg class="peng" width="84" height="42" viewBox="0 0 84 42">
        <path d="M2 39Q2 32 12 30L40 28 66 29Q76 30 78 37L73 39Z" fill="#bcd4ec" />
        <path d="M40 5 45 3 42 7 46 9 40 10ZM52 0 57 4 60 1 60 9 55 6Z" fill="#f2542d" />
        <path d="M31 8Q34 2 39 4 42 7 39 11 40 20 34 29 28 36 22 37L18 33 4 27 16 28Q23 24 26 15ZM57 8Q60 4 65 6 69 10 69 17 73 26 75 29L82 31 78 34 70 33 64 37Q57 33 58 24 60 18 58 14Z" fill="#55408e" />
        <path d="M27 17Q18 24 5 25 9 31 20 29Z" fill="#6d58a8" />
        <path d="M36 12Q39 20 33 29 28 35 25 34 34 22 34 13ZM59 12Q66 22 65 34 58 31 60 20Z" fill="#e6e2ee" />
        <circle cx="37" cy="7" r="1.500" fill="#fff" /><circle cx="61" cy="9" r="1.500" fill="#fff" />
        <path d="M20 36 30 35M58 36 69 36" stroke="#f07020" stroke-width="2.500" />
      </svg>
    </div>
    <div class="apps">
      {#each apps as a}
        <div class="a {a.tile ?? ''}"><svg width="36" height="36" viewBox="0 0 36 36">{@html a.i}</svg>{#if a.dot}<i></i>{/if}</div>
      {/each}
    </div>
    <svg class="tray" width="210" height="32" viewBox="0 0 210 32" fill="none" stroke="#fff" stroke-width="1.700">
      <path d="M1 19 9.500 10 18 19" />
      <path d="M37 21A6 6 0 0 1 38 10 8 8 0 0 1 52 9 6 6 0 0 1 54 20Z" fill="#ccc" stroke="none" /><circle cx="50" cy="20" r="8" fill="#4cc2ff" stroke="none" /><path d="M50 18V25M50 14V16" stroke="#113" stroke-width="2" />
      <path d="M71 14Q73 4 82 4 90 5 92 12M93 4V12H85M74 28 71 20M70 27V20H77M74 24Q78 29 84 28" /><circle cx="88" cy="21" r="6" fill="#f00" stroke="none" />
      <path d="M111 12Q123 0 135 12M114 16Q123 7 132 16M118 20Q123 14 128 20" /><circle cx="123" cy="22" r="1.700" fill="#fff" />
      <path d="M148 12H152L158 6V24L152 18H148ZM161 11Q164 15 161 19M164 8Q169 15 164 22M167 5Q174 15 167 25" />
      <path d="M192 9H204V22H189V18M207 13V18M184 3V8M189 3V8M182 8H191V13Q190 16 186 16V22" stroke-width="2" /><path d="M194 12H201V19H194Z" fill="#fff" stroke="none" />
    </svg>
    <div class="clock"><span>00:58</span><span>20/01/2025</span></div>
  </footer>
</div>

<style>
  :global(body) { background: #112a30; overflow: hidden; }
  .app { width: 1920px; height: 1080px; display: flex; flex-direction: column; font-family: 'Open Sans', 'Noto Sans', sans-serif; font-size: 18px; color: #252423; letter-spacing: -0.5px; white-space: nowrap; overflow: hidden; }
  .app :global(svg) { flex: none; display: block; overflow: visible; letter-spacing: 0; }
  .app, .app * { box-sizing: border-box; }
  i { display: block; flex: none; }
  .title { height: 51px; background: #3b3a39; color: #fff; display: flex; align-items: center; padding-left: 25px; font-size: 17px; flex: none; }
  .doc { width: 412px; margin-left: 5px; padding-top: 6px; font-size: 17.5px; letter-spacing: -0.13px; }
  .tri { margin: 4px 0 0 9px; border: 6px solid transparent; border-top: 7px solid #fff; border-bottom: 0; }
  .sign { margin-left: auto; width: 56px; padding-top: 2px; font-size: 17.5px; }
  .user { margin-left: 15px; }
  .win { margin: 4px 25px 0 46px; }
  .tabs { height: 52px; background: #fafafa; display: flex; align-items: stretch; font-size: 21px; flex: none; }
  .tab { display: flex; justify-content: center; align-items: flex-start; }
  .tab span { padding: 10px 0 2px; height: 47px; letter-spacing: -0.6px; }
  .tab.on span { font-weight: 600; border-bottom: 5px solid #117865; }
  .ctx { height: 47px; padding-top: 10px; background: #fff; text-align: center; font-weight: 600; color: #117865; width: 113px; letter-spacing: -0.7px; }
  .drill { width: 149px; margin-left: 6px; }
  .share { margin: 6px 9px 0 auto; width: 125px; height: 36px; background: #117865; border-radius: 6px; color: #fff; display: flex; align-items: center; font-size: 18px; padding-left: 8px; }
  .share span { width: 45px; margin: 0 7px 0 13px; }
  .ribbon { height: 137px; background: #fafafa; display: flex; flex: none; position: relative; z-index: 2; box-shadow: 0 4px 4px -1px #0002; padding-top: 2px; }
  .group { border-right: 1px solid #d2d0ce; height: 133px; display: flex; flex-direction: column; justify-content: space-between; }
  .clip { width: 240px; }
  .gname { text-align: center; font-size: 15px; line-height: 20px; letter-spacing: -0.4px; transform: translateY(1px); }
  .items { display: flex; padding-top: 6px; }
  .item { display: flex; flex-direction: column; align-items: center; flex: none; letter-spacing: -0.65px; }
  .item span { line-height: 24px; height: 24px; display: flex; align-items: center; gap: 3px; }
  .item > :global(svg) { transform: translateX(1px); }
  .item svg + span { margin-top: 4px; }
  .item.off { color: #c8c6c4; }
  .item.off > svg { opacity: .9; }
  .cliprow { display: flex; }
  .paste { width: 54px; margin-left: 15px; padding-top: 8px; color: #c8c6c4; }
  .paste svg { margin-left: 9px; }
  .paste span { display: block; text-align: center; line-height: 24px; margin-top: 4px; }
  .cmds { margin-left: 9px; letter-spacing: -0.6px; }
  .cmds div { display: flex; align-items: center; gap: 6px; height: 36px; }
  .collapse { margin: 117px 7px 0 auto; }
  main { display: flex; height: 733px; flex: none; background: #f3f2f1; }
  .rail { width: 61px; border-right: 1px solid #dcdcdc; flex: none; }
  .r { height: 60px; padding: 14px 0 0 16px; }
  .r.on { border-left: 4px solid #117865; padding-left: 12px; padding-top: 16px; }
  .r.dax { padding: 16px 0 0 15px; }
  .center { width: 1268px; flex: none; }
  .report { overflow: hidden !important; }
  .head { font: 800 35px 'Noto Sans', sans-serif; fill: #fff; }
  .bold { font-weight: 700; font-size: 14.5px; fill: #252423; }
  .tick { font-size: 9.5px; fill: #605e5c; }
  .dark { fill: #252423; }
  .axis { font-size: 13px; fill: #252423; }
  .leg { font-size: 11.5px; fill: #555; }
  .dots { stroke: #d0cecc; stroke-dasharray: 1.2 3; fill: none; }
  .pages { height: 54px; display: flex; border-bottom: 1px solid #dedddc; }
  .pg { width: 114px; height: 53px; background: #fff; border-left: 1px solid #b3b0ad; text-align: center; padding-top: 15px; }
  .pg.on { width: 117px; font-weight: 600; border-bottom: 6px solid #117865; }
  .add { width: 59px; height: 53px; background: #117865; display: grid; place-items: center; }
  .filters { width: 49px; border-left: 1px solid #b8b6b4; background: #f3f3f3; display: flex; flex-direction: column; align-items: center; padding-top: 19px; flex: none; }
  .flip { transform: scaleX(-1); }
  .fun { margin: 22px 0 0 8px; }
  .filters span { writing-mode: vertical-rl; font-size: 20px; font-weight: 700; margin-top: 12px; letter-spacing: 0.2px; width: 27px; }
  .viz { width: 271px; border-left: 1px solid #d6d4d2; flex: none; display: flex; flex-direction: column; border-bottom: 1px solid #dedddc; }
  .ph { display: flex; justify-content: space-between; align-items: center; height: 58px; padding: 0 11px 0 12px; flex: none; }
  h2 { margin: 0; font-size: 22px; font-weight: 600; letter-spacing: -0.5px; }
  .build { padding-left: 12px; height: 28px; line-height: 21px; }
  .modes { display: flex; gap: 51px; padding-left: 12px; height: 48px; flex: none; }
  .mode { width: 48px; height: 48px; flex: none; border-radius: 4px; }
  .mode.on { background: #d2d0ce; }
  .notch { margin-top: 6px; }
  .gallery { display: grid; grid-template-columns: repeat(6, 42px); grid-auto-rows: 42px; margin: 5px 0 0 10px; height: 343px; padding-top: 5px; flex: none; }
  .v { display: grid; place-items: center; width: 36px; height: 36px; margin-left: 2px; }
  .v.sel { outline: 1px solid #111; outline-offset: -1px; }
  .dots3 { display: flex; gap: 6px; justify-content: center; height: 30px; }
  .dots3 i { width: 3px; height: 3px; background: #252423; border-radius: 50%; }
  .wells { border-top: 1px solid #dedddc; height: 215px; padding: 4px 9px 0 6px; overflow: hidden; position: relative; }
  .empty { height: 35px; background: #fff; border: 1px dashed #c8c6c4; border-top: 0; padding: 0 0 0 15px; line-height: 24px; }
  .lb { height: 48px; padding: 15px 0 0 12px; line-height: 26px; }
  .well { height: 52px; border: 1px dashed #c8c6c4; background: #fff; padding: 3px; }
  .chip { height: 34px; background: #edebe9; border: 1px solid #c0bebc; border-radius: 3px; display: flex; align-items: center; justify-content: space-between; padding: 0 4px 0 6px; }
  .wells .thumb { position: absolute; right: 0; top: 15px; width: 9px; height: 54px; border-radius: 5px; background: #d2d0ce; }
  .data { flex: 1; border-left: 1px solid #d6d4d2; border-bottom: 1px solid #dedddc; }
  .search { margin: 10px 6px 0 6px; height: 36px; background: #fff; border: 1px solid #c8c6c4; border-bottom-color: #605e5c; border-radius: 6px; display: flex; align-items: center; padding-left: 19px; gap: 6px; font-size: 20px; color: #616161; }
  .search span { padding-top: 2px; }
  .fields { position: relative; padding-top: 5px; }
  .f { height: 36px; display: flex; align-items: center; padding-left: 44px; }
  .cb { width: 18px; height: 18px; border: 1.5px solid #7a7876; border-radius: 3px; margin: 0 11px 0 10px; }
  .cb.ck { background: #117865; border-color: #117865; }
  .kd { margin-right: 6px; }
  .fields .thumb { position: absolute; right: 6px; top: 38px; width: 12px; height: 195px; background: #c8c6c4; }
  .status { height: 34px; background: #f3f2f1; display: flex; align-items: center; color: #484644; flex: none; padding: 0 27px 0 6px; border-bottom: 1px solid #000; }
  .pn { margin-right: auto; }
  .pct { width: 37px; margin: 0 26px 0 20px; color: #605e5c; }
  .task { flex: 1; background: #112a30; display: flex; align-items: center; color: #fff; padding: 3px 23px 0 24px; }
  .start { margin-left: 112px; }
  .pill { width: 329px; height: 48px; background: #2c3e43; border: 1px solid #3a4b50; border-radius: 24px; margin-left: 20px; display: flex; align-items: center; padding-left: 17px; font-size: 20px; gap: 13px; color: #d8dcdd; }
  .peng { margin: 2px 4px 0 auto; }
  .apps { display: flex; margin-left: 3px; }
  .a { width: 60px; height: 60px; margin: 0 3px; border-radius: 6px; display: flex; flex-direction: column; align-items: center; padding-top: 12px; }
  .a i { width: 8px; height: 5px; border-radius: 3px; background: #9aa3a5; margin-top: 6px; }
  .a.red { background: #46282c; }
  .a.red i { background: #ff9aa8; }
  .a.on { background: #26393f; border: 1px solid #35474c; padding-top: 11px; width: 54px; margin-right: 9px; box-shadow: 4px 0 0 -1px #1d3137, 5px 0 0 -1px #35474c; }
  .a.on i { background: #4cc2ff; width: 24px; }
  .tray { margin-left: 28px; }
  .clock { margin: 0 -2px 0 auto; text-align: right; font-size: 18px; letter-spacing: -0.6px; line-height: 23px; display: flex; flex-direction: column; }
</style>
